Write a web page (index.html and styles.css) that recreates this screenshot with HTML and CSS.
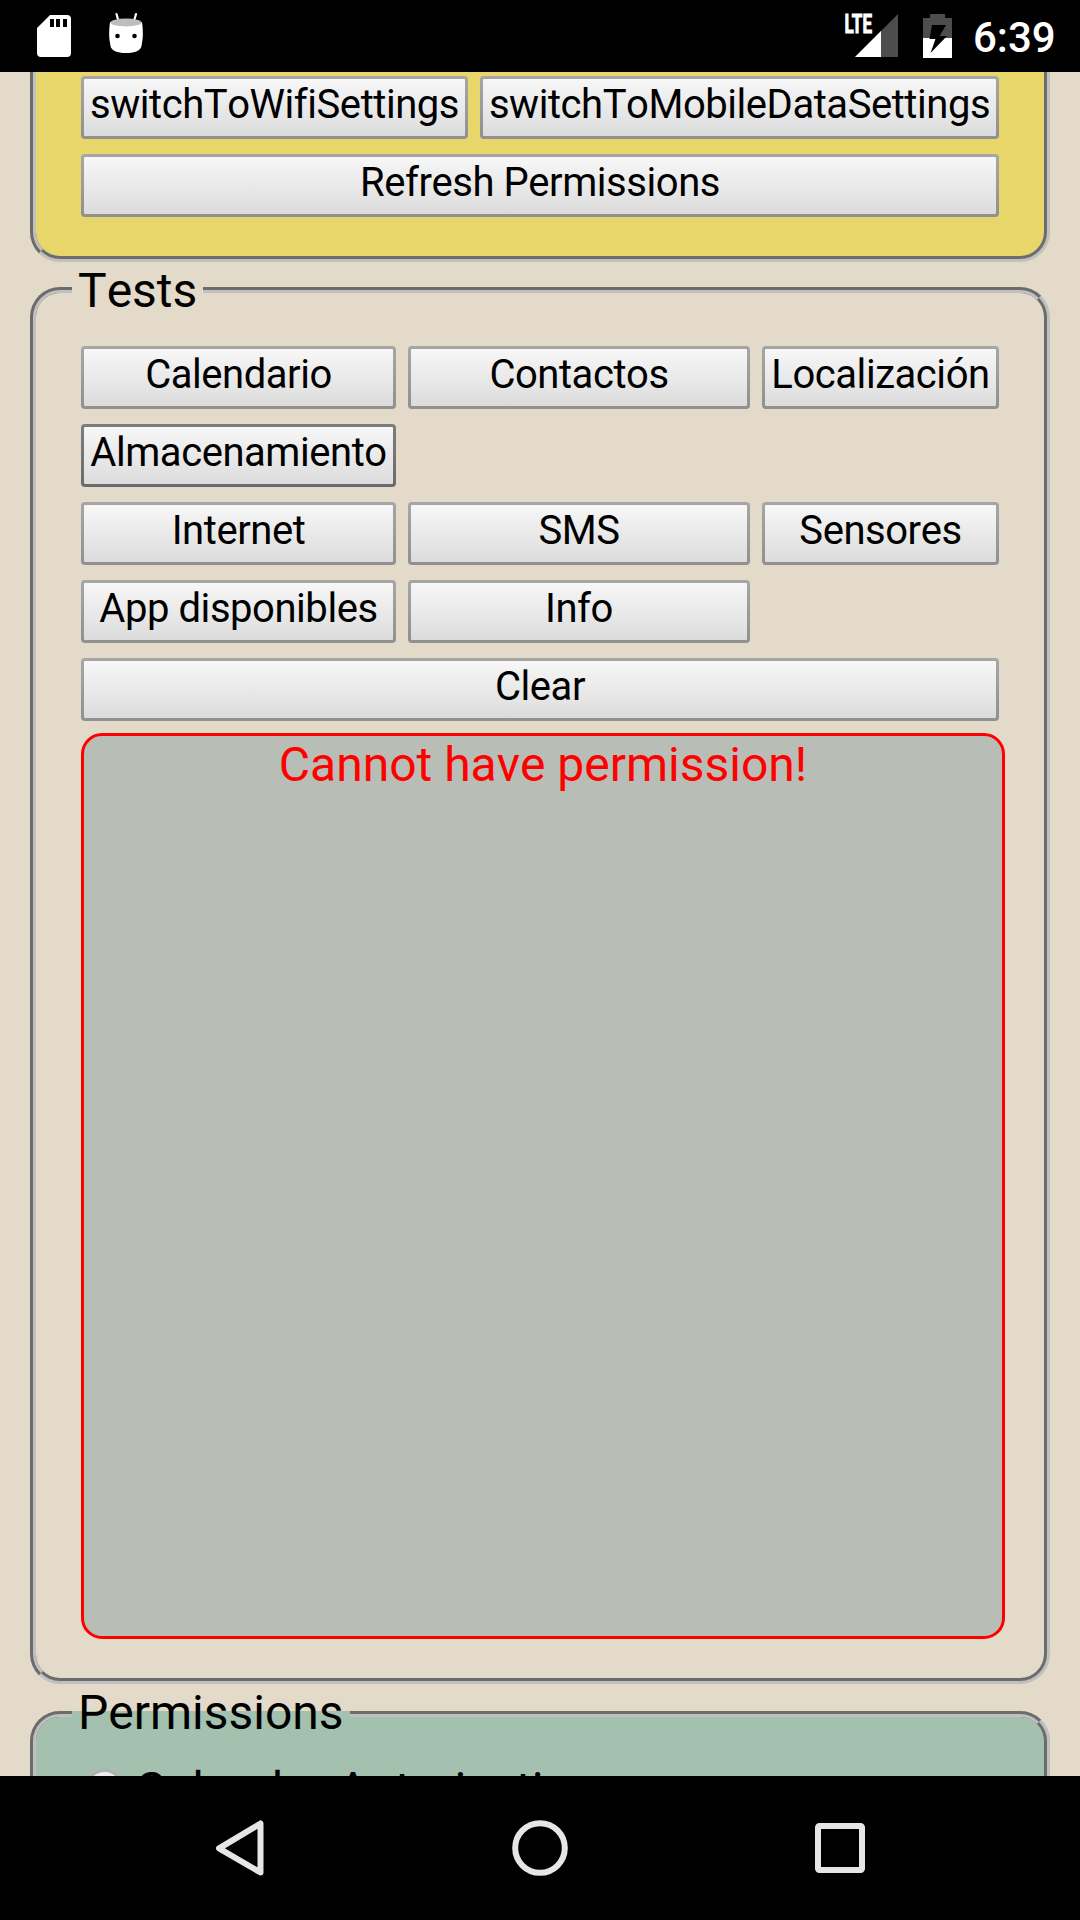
FILE: index.html
```html
<!DOCTYPE html>
<html lang="es">
<head>
<meta charset="utf-8">
<title>Permissions</title>
<link rel="stylesheet" href="styles.css">
</head>
<body>
<header class="status">
  <svg class="status-left" width="160" height="72" viewBox="0 0 160 72">
    <path fill="#fff" fill-rule="evenodd" d="M50 15H67Q71 15 71 19V53Q71 57 67 57H41Q37 57 37 53V28ZM50 19V27H54V19ZM56 19V27H60V19ZM63 19V27H67V19Z"/>
    <path d="M116.500 14L119 23M136 14L133.500 23" stroke="#fff" stroke-width="2.200" stroke-linecap="round"/>
    <path fill="#fff" d="M110 22Q126 30 142 22Q144 35 141.500 46Q140 53 126 53Q112 53 110.500 46Q108 35 110 22Z"/>
    <ellipse cx="126" cy="22.500" rx="15.500" ry="3.900" fill="#bdbdbd"/>
    <circle cx="117.500" cy="36" r="2.300"/><circle cx="134.500" cy="36" r="2.300"/>
  </svg>
  <svg class="status-right" width="120" height="72" viewBox="840 0 120 72">
    <path fill="#4d4d4d" d="M898 14V57H855Z"/>
    <path fill="#fff" d="M881 31V57H855Z"/>
    <text class="lte" x="844.500" y="33" textLength="27.500" lengthAdjust="spacingAndGlyphs">LTE</text>
    <path fill="#4d4d4d" d="M930 14H945V18H952V38H923V18H930Z"/>
    <path fill="#fff" d="M923 38H952V58H923Z"/>
    <path d="M932 25H946L939.500 36H947L930.500 53L935.500 39H929.500Z"/>
  </svg>
  <time class="clock">6:39</time>
</header>

<main class="page">
  <fieldset class="card settings">
    <div class="row">
      <button class="btn wifi">switchToWifiSettings</button>
      <button class="btn mobile">switchToMobileDataSettings</button>
    </div>
    <button class="btn wide">Refresh Permissions</button>
  </fieldset>

  <fieldset class="card tests">
    <legend>Tests</legend>
    <div class="grid">
      <button class="btn">Calendario</button>
      <button class="btn">Contactos</button>
      <button class="btn">Localización</button>
      <button class="btn active">Almacenamiento</button>
      <button class="btn first">Internet</button>
      <button class="btn">SMS</button>
      <button class="btn">Sensores</button>
      <button class="btn">App disponibles</button>
      <button class="btn">Info</button>
      <button class="btn full">Clear</button>
    </div>
    <div class="output">Cannot have permission!</div>
  </fieldset>

  <fieldset class="card permissions">
    <legend>Permissions</legend>
    <label class="option"><span class="radio"></span>Calendar Autorization</label>
  </fieldset>
</main>

<nav class="navbar">
  <svg width="1080" height="144" viewBox="0 1776 1080 144" fill="none" stroke="#e6e6e6" stroke-width="6">
    <path stroke-linejoin="round" d="M219 1848.300L260.500 1823.500V1872.500Z"/>
    <circle cx="540" cy="1848" r="24.800"/>
    <rect x="818" y="1826" width="44" height="44" rx="1.500"/>
  </svg>
</nav>
</body>
</html>
```
FILE: styles.css
```css
* { box-sizing: border-box; }
body {
  margin: 0;
  width: 1080px;
  height: 1920px;
  overflow: hidden;
  display: flex;
  flex-direction: column;
  background: #e3dac9;
  color: #000;
  font: 48px/56px Roboto, sans-serif;
  font-kerning: none;
}
.status {
  flex: none;
  height: 72px;
  display: flex;
  background: #000;
}
.status svg, .navbar svg { display: block; }
.status-right { margin-left: 680px; }
.lte {
  font: 700 25px Roboto, sans-serif;
  fill: #fff;
  stroke: #fff;
  stroke-width: 0.9px;
}
.clock {
  margin-left: 13px;
  font-size: 42px;
  line-height: 75px;
  font-weight: 500;
  color: #fff;
}
.page {
  flex: none;
  height: 1704px;
  overflow: hidden;
  padding: 0 30px;
}
.card {
  margin: 0;
  min-width: 0;
  border: 6px groove #c0c0c0;
  border-radius: 30px;
  padding: 0 45px;
}
.settings {
  height: 190px;
  padding-top: 4px;
  border-top: 0;
  border-top-left-radius: 0;
  border-top-right-radius: 0;
  background: #e8d66a;
}
.row { display: flex; gap: 12px; margin-bottom: 15px; }
.btn {
  height: 63px;
  margin: 0;
  padding: 0 0 6px;
  border: 3px solid transparent;
  border-radius: 4px;
  background:
    linear-gradient(#f7f7f7, #dcdcdc) padding-box,
    linear-gradient(#a6a6a6, #909090) border-box;
  color: #000;
  font: 40px/47px Roboto, sans-serif;
  font-kerning: none;
  letter-spacing: -0.45px;
  white-space: nowrap;
}
.btn.active {
  background:
    linear-gradient(#f7f7f7, #dcdcdc) padding-box,
    linear-gradient(#7c7d7d, #6b6b6e) border-box;
}
.wifi { width: 387px; }
.mobile { width: 519px; }
.wide { display: block; width: 918px; }
legend { padding: 0 6px; margin-left: -9px; height: 57px; }
.tests legend { padding-top: 2px; }
.tests { height: 1423px; margin-top: -1px; }
.grid {
  display: grid;
  grid-template-columns: 315px 342px 237px;
  gap: 15px 12px;
  padding-top: 28px;
}
.first { grid-column: 1; }
.full { grid-column: 1 / -1; }
.output {
  width: 924px;
  height: 906px;
  margin-top: 12px;
  padding-top: 1px;
  border: 3px solid #f00;
  border-radius: 21px;
  background: #b8bdb6;
  color: #f00;
  text-align: center;
}
.permissions { height: 400px; margin-top: 1px; background: #a4c1af; }
.option { display: flex; align-items: flex-start; padding: 20px 0 0 4px; }
.radio {
  width: 39px;
  height: 39px;
  margin: 7px 11px 0 0;
  border: 3px solid #b0b0b0;
  border-radius: 50%;
  background: linear-gradient(#eee, #ddd);
}
.navbar { flex: none; height: 144px; background: #000; }
```
